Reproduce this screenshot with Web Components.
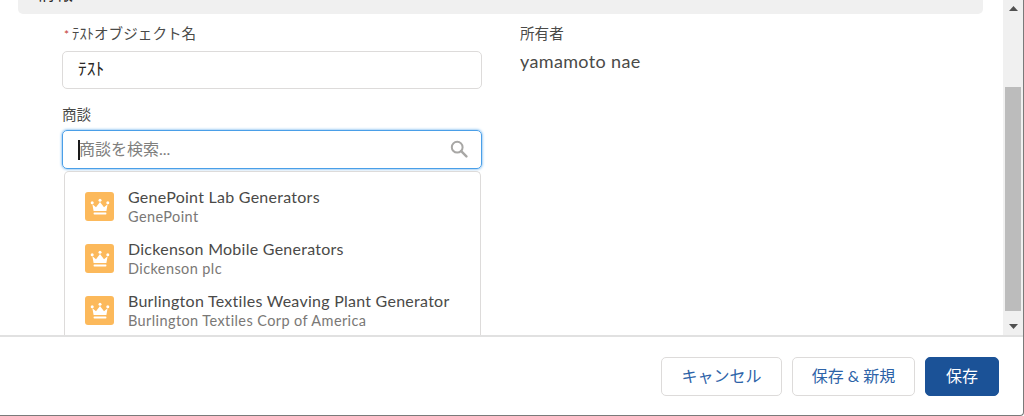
<!DOCTYPE html>
<html lang="ja">
<head>
<meta charset="utf-8">
<style>
  html, body { margin: 0; height: 416px; overflow: hidden; background: #fff; }
</style>
</head>
<body>
<modal-shell>
  <section-bar slot="body">情報</section-bar>
  <div slot="body" style="display:grid;grid-template-columns:420px 420px;column-gap:38px;padding:0 0 0 62px">
    <div>
      <text-field label="ﾃｽﾄオブジェクト名" value="ﾃｽﾄ" required></text-field>
      <lookup-field label="商談" placeholder="商談を検索...">
        <lookup-item title="GenePoint Lab Generators" sub="GenePoint"></lookup-item>
        <lookup-item title="Dickenson Mobile Generators" sub="Dickenson plc"></lookup-item>
        <lookup-item title="Burlington Textiles Weaving Plant Generator" sub="Burlington Textiles Corp of America"></lookup-item>
      </lookup-field>
    </div>
    <owner-field label="所有者" value="yamamoto nae"></owner-field>
  </div>
  <action-button slot="footer" style="width:121px">キャンセル</action-button>
  <action-button slot="footer" style="width:123px">保存 &amp; 新規</action-button>
  <action-button slot="footer" style="width:74px" primary>保存</action-button>
</modal-shell>

<script>
const FONT = `Lato, "Noto Sans", "Noto Sans CJK JP", sans-serif`

class ModalShell extends HTMLElement {
  constructor() {
    super()
    const shadow = this.attachShadow({mode: 'open'})
    shadow.innerHTML = `
      <style>
        :host {
          display: flex;
          flex-direction: column;
          box-sizing: border-box;
          width: 1024px;
          height: 416px;
          font-family: ${FONT};
          color: #3e3e3c;
          border-right: 1px solid #7a7a7a;
          border-bottom: 1px solid #7a7a7a;
          border-bottom-right-radius: 4px;
          overflow: hidden;
        }
        .top { display: flex; height: 335px; flex: none; }
        .content { flex: 1; min-width: 0; overflow: hidden; }
        .scroll {
          flex: none;
          box-sizing: border-box;
          width: 20px;
          padding: 0 2px;
          background: #f0f0f0;
          display: flex;
          flex-direction: column;
          align-items: stretch;
        }
        .arrow { height: 17px; flex: none; display: flex; align-items: center; justify-content: center; }
        .track { flex: 1; display: flex; flex-direction: column; }
        .space-a { height: 70px; flex: none; }
        .thumb { height: 224px; flex: none; background: #bcbcbc; }
        footer {
          flex: 1;
          border-top: 2px solid #e1e1e1;
          display: flex;
          justify-content: flex-end;
          align-items: flex-start;
          gap: 10px;
          padding: 20px 24px 0 0;
        }
      </style>
      <div class="top">
        <div class="content"><slot name="body"></slot></div>
        <div class="scroll">
          <div class="arrow"><svg width="9" height="5" viewBox="0 0 9 5"><path d="M4.5 0L9 5H0z" fill="#505050"/></svg></div>
          <div class="track"><div class="space-a"></div><div class="thumb"></div></div>
          <div class="arrow"><svg width="9" height="5" viewBox="0 0 9 5"><path d="M0 0h9L4.5 5z" fill="#505050"/></svg></div>
        </div>
      </div>
      <footer><slot name="footer"></slot></footer>
    `
  }
}

class SectionBar extends HTMLElement {
  constructor() {
    super()
    const shadow = this.attachShadow({mode: 'open'})
    shadow.innerHTML = `
      <style>
        :host {
          display: flex;
          align-items: flex-end;
          box-sizing: border-box;
          height: 14px;
          margin: 0 20px 0 18px;
          padding: 0 0 12px 19px;
          background: #f0f0f0;
          border-radius: 0 0 5px 5px;
          overflow: hidden;
          font-size: 18px;
          line-height: 18px;
          color: #2b2826;
        }
      </style>
      <slot></slot>
    `
  }
}

class TextField extends HTMLElement {
  constructor() {
    super()
    const shadow = this.attachShadow({mode: 'open'})
    const star = this.hasAttribute('required') ? '<i>*</i>' : ''
    shadow.innerHTML = `
      <style>
        :host { display: block; padding-top: 10px; }
        label { display: block; height: 20px; font-size: 14.6px; line-height: 20px; margin-bottom: 7px; color: #4a4a48; }
        i { font-style: normal; font-size: 12px; color: #c23934; margin-left: 2px; margin-right: 3px; }
        .input {
          box-sizing: border-box;
          height: 38px;
          border: 1px solid #dddbda;
          border-radius: 5px;
          padding: 0 0 2px 15px;
          font-size: 17.5px;
          line-height: 34px;
          color: #2b2826;
        }
      </style>
      <label>${star}${this.getAttribute('label')}</label>
      <div class="input">${this.getAttribute('value')}</div>
    `
  }
}

class LookupField extends HTMLElement {
  constructor() {
    super()
    const shadow = this.attachShadow({mode: 'open'})
    shadow.innerHTML = `
      <style>
        :host { display: block; padding-top: 16px; }
        label { display: block; height: 20px; font-size: 14.6px; line-height: 20px; margin-bottom: 5px; color: #4a4a48; }
        .input {
          box-sizing: border-box;
          height: 39px;
          border: 1px solid #4a9fe8;
          border-radius: 5px;
          box-shadow: 0 0 3px #4a9fe8;
          padding: 0 13px 0 15px;
          display: flex;
          align-items: center;
          font-size: 16px;
          color: #80807e;
        }
        .caret { width: 2px; height: 20px; background: #1a1a1a; flex: none; }
        .text { flex: 1; padding-bottom: 4px; margin-left: -1px; }
        svg { flex: none; margin-bottom: 2px; }
        .menu {
          box-sizing: border-box;
          margin: 2px 1px 0 2px;
          height: 180px;
          padding: 15px 0 0 20px;
          border: 1px solid #dddbda;
          border-bottom: 0;
          border-radius: 5px 5px 0 0;
          display: flex;
          flex-direction: column;
          gap: 10px;
        }
      </style>
      <label>${this.getAttribute('label')}</label>
      <div class="input">
        <span class="caret"></span><span class="text">${this.getAttribute('placeholder')}</span>
        <svg width="18" height="18" viewBox="0 0 18 18" fill="none" stroke="#a8a7a5">
          <circle cx="7.2" cy="7.2" r="5.4" stroke-width="2"/>
          <path d="M11.2 11.2L16.4 16.4" stroke-width="2.4" stroke-linecap="round"/>
        </svg>
      </div>
      <div class="menu"><slot></slot></div>
    `
  }
}

class LookupItem extends HTMLElement {
  constructor() {
    super()
    const shadow = this.attachShadow({mode: 'open'})
    shadow.innerHTML = `
      <style>
        :host { display: flex; align-items: flex-start; gap: 14px; height: 42px; }
        .icon {
          flex: none;
          width: 29px;
          height: 29px;
          margin-top: 5px;
          background: #fcb95b;
          border-radius: 3px;
          display: flex;
          align-items: center;
          justify-content: center;
        }
        .title { font-size: 16px; letter-spacing: .26px; line-height: 20px; color: #4a4a48; white-space: nowrap; }
        .sub { font-size: 14.5px; letter-spacing: .4px; line-height: 20px; color: #7a7876; white-space: nowrap; }
      </style>
      <div class="icon">
        <svg width="20" height="20" viewBox="0 0 20 20" fill="#fff">
          <circle cx="2.2" cy="5.8" r="1.5"/><circle cx="10" cy="3.2" r="1.5"/><circle cx="17.8" cy="5.8" r="1.5"/>
          <path d="M2.4 7.2L6 10.2 10 5 14 10.2 17.6 7.2 16.4 14H3.6z"/>
          <rect x="3.6" y="15.6" width="12.8" height="1.8" rx=".6"/>
        </svg>
      </div>
      <div>
        <div class="title">${this.getAttribute('title')}</div>
        <div class="sub">${this.getAttribute('sub')}</div>
      </div>
    `
  }
}

class OwnerField extends HTMLElement {
  constructor() {
    super()
    const shadow = this.attachShadow({mode: 'open'})
    shadow.innerHTML = `
      <style>
        :host { display: block; padding-top: 10px; }
        label { display: block; height: 20px; font-size: 14.6px; line-height: 20px; margin-bottom: 6px; color: #4a4a48; }
        div { font-size: 18px; letter-spacing: .35px; line-height: 22px; color: #4a4a48; }
      </style>
      <label>${this.getAttribute('label')}</label>
      <div>${this.getAttribute('value')}</div>
    `
  }
}

class ActionButton extends HTMLElement {
  constructor() {
    super()
    const shadow = this.attachShadow({mode: 'open'})
    shadow.innerHTML = `
      <style>
        :host {
          display: inline-flex;
          align-items: center;
          justify-content: center;
          box-sizing: border-box;
          height: 39px;
          padding: 0 0 3px;
          font-size: 16px;
          color: #2d63a8;
          background: #fff;
          border: 1px solid #dddbda;
          border-radius: 5px;
        }
        :host([primary]) {
          background: #1b5297;
          border-color: #1b5297;
          color: #fff;
        }
      </style>
      <slot></slot>
    `
  }
}

customElements.define('modal-shell', ModalShell)
customElements.define('section-bar', SectionBar)
customElements.define('text-field', TextField)
customElements.define('lookup-field', LookupField)
customElements.define('lookup-item', LookupItem)
customElements.define('owner-field', OwnerField)
customElements.define('action-button', ActionButton)
</script>
</body>
</html>
